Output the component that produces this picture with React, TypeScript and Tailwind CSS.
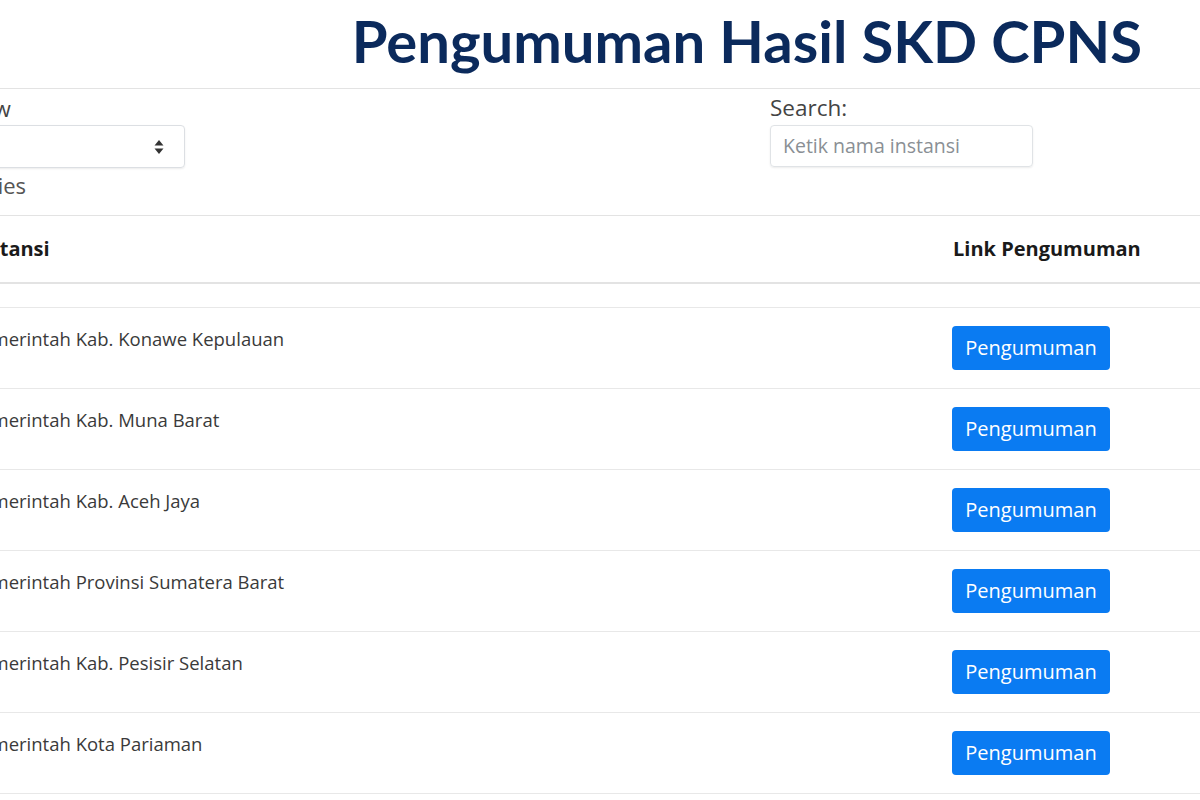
import React from "react";

const rows = [
  "Pemerintah Kab. Konawe Kepulauan",
  "Pemerintah Kab. Muna Barat",
  "Pemerintah Kab. Aceh Jaya",
  "Pemerintah Provinsi Sumatera Barat",
  "Pemerintah Kab. Pesisir Selatan",
  "Pemerintah Kota Pariaman",
];

export default function App() {
  return (
    <div
      className="w-[1200px] h-[800px] overflow-hidden bg-white text-[#212529]"
      style={{ fontFamily: '"Open Sans", "Noto Sans", sans-serif' }}
    >
      <div className="ml-[-45px] w-[1300px]">
        {/* Title */}
        <div className="h-[88px] flex justify-end pr-[113px] pt-[5px]">
          <h1
            className="text-[58px] leading-[72px] font-bold text-[#0b2a5c]"
            style={{ fontFamily: 'Lato, "Noto Sans", sans-serif' }}
          >
            Pengumuman Hasil SKD CPNS
          </h1>
        </div>
        <div className="h-px bg-[#e3e3e3]" />

        {/* Controls */}
        <div className="h-[126px] flex">
          <div className="w-[230px] pt-[4px]">
            <div className="text-[22px] leading-[30px] text-[#444]">Show</div>
            <div className="mt-[2px] h-[43px] w-[230px] rounded-[4px] border border-[#dcdfe3] shadow-[0_1px_2px_rgba(0,0,0,0.08)] flex items-center justify-end pr-[20px]">
              <svg width="10" height="16" viewBox="0 0 10 16">
                <path d="M5 1 L9.5 6.5 H0.5 Z" fill="#333" />
                <path d="M5 15 L9.5 9.5 H0.5 Z" fill="#333" />
              </svg>
            </div>
            <div className="text-[22px] leading-[30px] mt-[2px] text-[#555]">entries</div>
          </div>
          <div className="ml-[585px] pt-[4px]">
            <div className="text-[22.5px] leading-[30px] text-[#444]">Search:</div>
            <div className="mt-[2px] h-[42px] w-[263px] rounded-[4px] border border-[#e0e3e6] shadow-[0_1px_2px_rgba(0,0,0,0.08)] flex items-center pl-[12px] text-[19.5px] text-[#8a8f94]">
              Ketik nama instansi
            </div>
          </div>
        </div>
        <div className="h-px bg-[#e3e3e3]" />

        {/* Header */}
        <div className="h-[66px] flex items-center text-[20px] font-bold text-[#1a1a1a]">
          <div className="w-[982px] pl-[15px]">Instansi</div>
          <div className="pl-[16px]">Link Pengumuman</div>
        </div>
        <div className="h-[2px] bg-[#e3e3e3]" />
        <div className="h-[23px]" />
        <div className="h-px bg-[#e8e8e8]" />

        {rows.map((r) => (
          <div key={r}>
            <div className="h-[80px] flex">
              <div className="w-[982px] pl-[15px] pt-[17px] text-[18.5px] leading-[28px] text-[#3a3a3a]">
                {r}
              </div>
              <div className="pl-[15px] pt-[18px]">
                <button className="h-[44px] w-[158px] rounded-[4px] bg-[#0a7bf2] text-white text-[20px] leading-[44px] text-center">
                  Pengumuman
                </button>
              </div>
            </div>
            <div className="h-px bg-[#e8e8e8]" />
          </div>
        ))}
      </div>
    </div>
  );
}
